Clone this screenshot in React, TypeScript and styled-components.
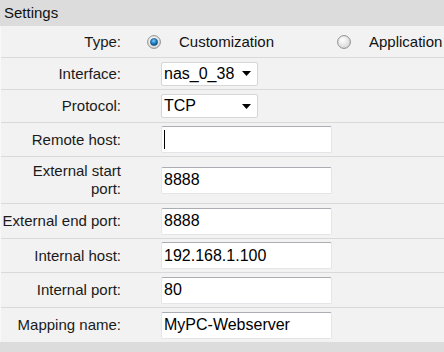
import React from "react";
import styled, { createGlobalStyle } from "styled-components";

const Global = createGlobalStyle`
  html, body { margin: 0; padding: 0; background: #dcdcdc; }
  body { font-family: "Liberation Sans", Arial, sans-serif; color: #1a1a1a; }
  * { box-sizing: border-box; }
`;

const Panel = styled.div`
  width: 444px;
  height: 352px;
  overflow: hidden;
  background: #dcdcdc;
  display: flex;
  flex-direction: column;
`;

const Header = styled.div`
  height: 26px;
  line-height: 26px;
  padding-left: 4px;
  font-size: 15px;
  color: #111;
  background: #dcdcdc;
`;

const Body = styled.div`
  background: #f2f2f2;
  border-left: 1px solid #f8f8f8;
`;

const Row = styled.div<{ $h: number }>`
  display: grid;
  grid-template-columns: 120px 1fr;
  align-items: center;
  height: ${(p) => p.$h}px;
  border-bottom: 1px solid #d9d9d9;
  &:last-child { border-bottom: none; }
`;

const Label = styled.div`
  text-align: right;
  font-size: 15px;
  line-height: 18px;
  color: #1a1a1a;
`;

const Value = styled.div`
  display: flex;
  align-items: center;
  min-width: 0;
`;

const RadioGroup = styled.div`
  display: flex;
  align-items: center;
  margin-left: 26px;
`;

const RadioOption = styled.label`
  display: flex;
  align-items: center;
  gap: 18px;
  width: 190px;
  flex-shrink: 0;
  font-size: 15px;
  color: #111;
  white-space: nowrap;
`;

const SelectBox = styled.div`
  margin-left: 40px;
  width: 97px;
  height: 24px;
  background: #fff;
  border: 1px solid #d6d6d6;
  border-radius: 2px;
  display: flex;
  align-items: center;
  justify-content: space-between;
  padding: 0 6px 0 2px;
  font-size: 16px;
  color: #000;
`;

const FieldWrap = styled.div`
  position: relative;
  margin-left: 40px;
  width: 171px;
  height: 27px;
`;

const TextInput = styled.input`
  width: 100%;
  height: 100%;
  background: #fff;
  border: 1px solid #e3e5e8;
  border-top-color: #abadb3;
  border-radius: 2px;
  padding: 0 2px;
  font-family: "Liberation Sans", Arial, sans-serif;
  font-size: 16px;
  color: #000;
  outline: none;
  caret-color: transparent;
`;

const Caret = styled.span`
  position: absolute;
  left: 3px;
  top: 4px;
  width: 1px;
  height: 19px;
  background: #000;
`;

const Bottom = styled.div`
  flex: 1;
  background: #dcdcdc;
`;

function Radio({ checked }: { checked: boolean }) {
  return (
    <svg width="14" height="14" viewBox="0 0 14 14">
      <defs>
        <radialGradient id="off" cx="0.4" cy="0.35" r="0.7">
          <stop offset="0" stopColor="#ffffff" />
          <stop offset="1" stopColor="#d4d4d4" />
        </radialGradient>
        <radialGradient id="on" cx="0.45" cy="0.35" r="0.7">
          <stop offset="0" stopColor="#7fd0ff" />
          <stop offset="0.5" stopColor="#1f7fc8" />
          <stop offset="1" stopColor="#083e6e" />
        </radialGradient>
      </defs>
      <circle cx="7" cy="7" r="6.4" fill="url(#off)" stroke="#8e8f8f" strokeWidth="1" />
      {checked && <circle cx="7" cy="7" r="3.6" fill="url(#on)" stroke="#1b4f7a" strokeWidth="0.6" />}
    </svg>
  );
}

function Arrow() {
  return (
    <svg width="9" height="5" viewBox="0 0 9 5">
      <polygon points="0,0 9,0 4.5,5" fill="#000" />
    </svg>
  );
}

function Select({ value }: { value: string }) {
  return (
    <SelectBox>
      <span>{value}</span>
      <Arrow />
    </SelectBox>
  );
}

function Field({ value, caret }: { value: string; caret?: boolean }) {
  return (
    <FieldWrap>
      <TextInput defaultValue={value} readOnly />
      {caret && <Caret />}
    </FieldWrap>
  );
}

export default function App() {
  return (
    <>
      <Global />
      <Panel>
        <Header>Settings</Header>
        <Body>
          <Row $h={32}>
            <Label>Type:</Label>
            <Value>
              <RadioGroup>
                <RadioOption>
                  <Radio checked />
                  Customization
                </RadioOption>
                <RadioOption>
                  <Radio checked={false} />
                  Application
                </RadioOption>
              </RadioGroup>
            </Value>
          </Row>
          <Row $h={32}>
            <Label>Interface:</Label>
            <Value>
              <Select value="nas_0_38" />
            </Value>
          </Row>
          <Row $h={33}>
            <Label>Protocol:</Label>
            <Value>
              <Select value="TCP" />
            </Value>
          </Row>
          <Row $h={34}>
            <Label>Remote host:</Label>
            <Value>
              <Field value="" caret />
            </Value>
          </Row>
          <Row $h={47}>
            <Label>External start port:</Label>
            <Value>
              <Field value="8888" />
            </Value>
          </Row>
          <Row $h={35}>
            <Label>External end port:</Label>
            <Value>
              <Field value="8888" />
            </Value>
          </Row>
          <Row $h={34}>
            <Label>Internal host:</Label>
            <Value>
              <Field value="192.168.1.100" />
            </Value>
          </Row>
          <Row $h={35}>
            <Label>Internal port:</Label>
            <Value>
              <Field value="80" />
            </Value>
          </Row>
          <Row $h={34}>
            <Label>Mapping name:</Label>
            <Value>
              <Field value="MyPC-Webserver" />
            </Value>
          </Row>
        </Body>
        <Bottom />
      </Panel>
    </>
  );
}
